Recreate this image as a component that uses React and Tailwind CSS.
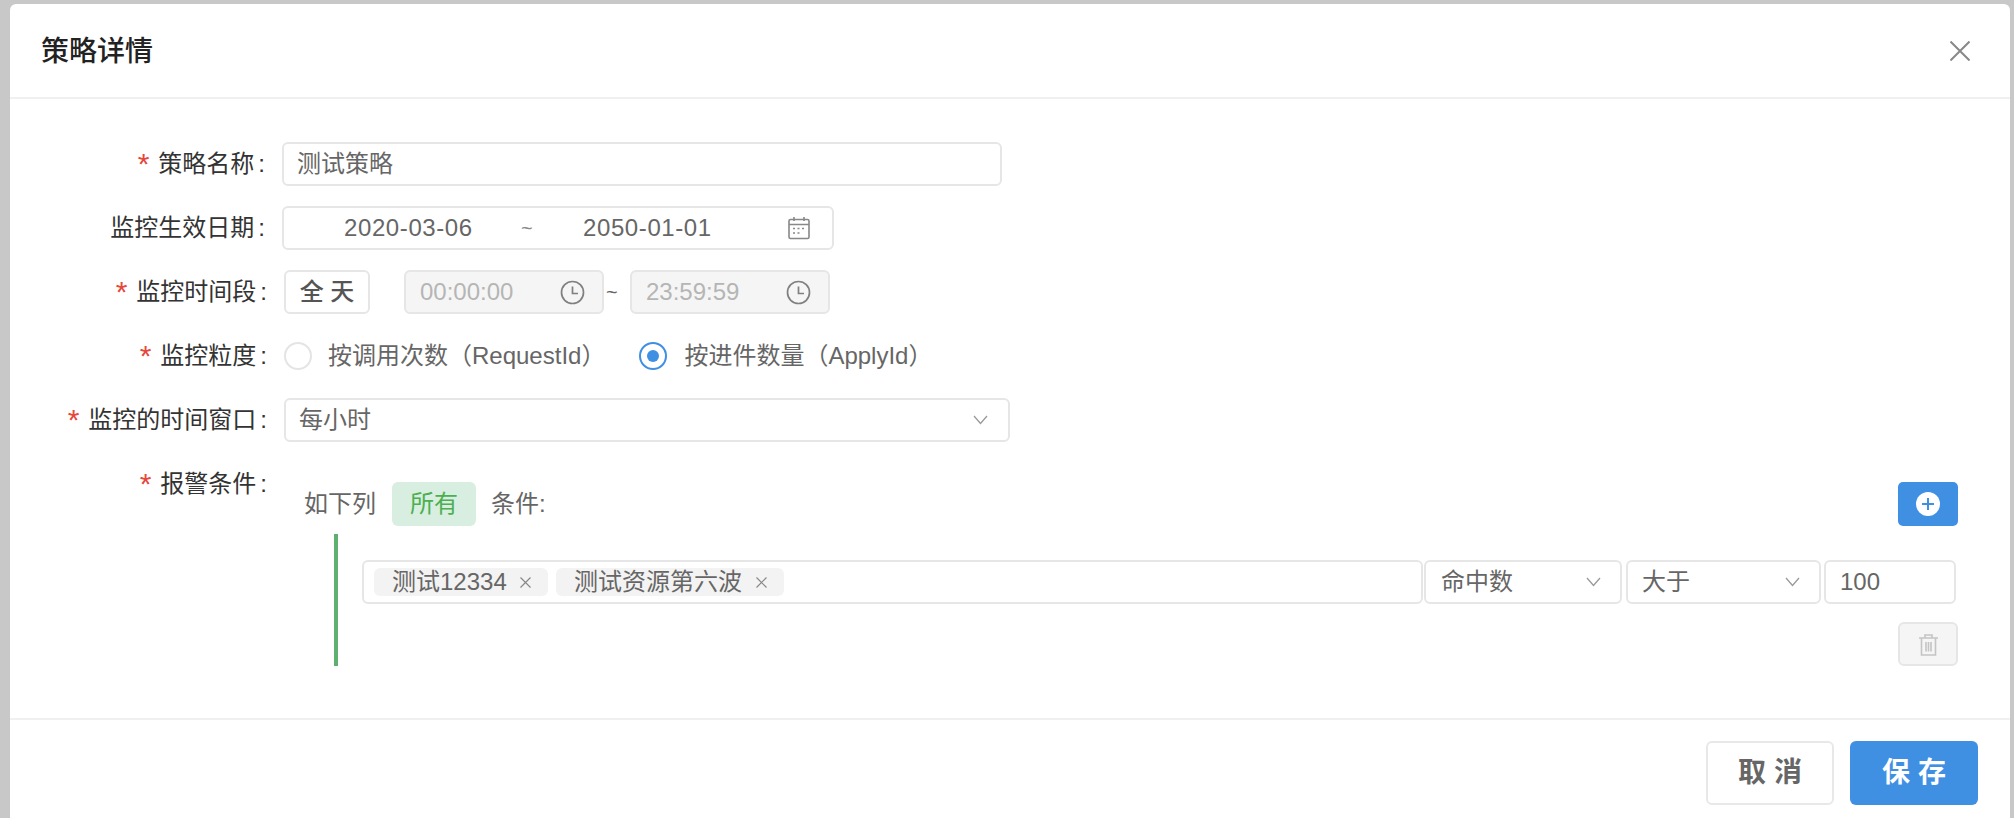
const font = { fontFamily: '"Liberation Sans", "Noto Sans CJK SC", sans-serif' };

function Label({ required, children, pad = 'pr-[16px]', width = 'w-[273px]' }) {
  return (
    <div className={`${width} ${pad} shrink-0 h-[44px] flex items-center justify-end text-[24px] text-[#333] whitespace-nowrap`}>
      {required && <span className="text-[#e5483a] text-[30px] leading-none mr-[9px]">*</span>}
      <span>{children}</span>
      <span className="ml-[4px]">:</span>
    </div>
  );
}

function Chevron() {
  return (
    <svg width="15" height="10" viewBox="0 0 15 10" fill="none" stroke="#999" strokeWidth="1.3" className="shrink-0">
      <path d="M1 1 L7.5 8.5 L14 1" />
    </svg>
  );
}

function Clock() {
  return (
    <svg width="25" height="25" viewBox="0 0 25 25" fill="none" stroke="#808080" strokeWidth="1.7" className="shrink-0">
      <circle cx="12.5" cy="12.5" r="11" />
      <path d="M12.5 6.5 V13.5 H18" />
    </svg>
  );
}

function Calendar() {
  return (
    <svg width="22" height="24" viewBox="0 0 22 24" fill="none" stroke="#888" strokeWidth="1.6" className="shrink-0">
      <rect x="1" y="3.5" width="20" height="19" rx="1.5" />
      <path d="M1 8.5 H21 M6 1 V5 M16 1 V5" />
      <path d="M5 12.5 H8 M9.5 12.5 H12.5 M14 12.5 H17 M5 17 H8 M9.5 17 H12.5" strokeDasharray="2 1" />
    </svg>
  );
}

function Close() {
  return (
    <svg width="13" height="13" viewBox="0 0 13 13" fill="none" stroke="#888" strokeWidth="1.2" className="shrink-0">
      <path d="M1.5 1.5 L11.5 11.5 M11.5 1.5 L1.5 11.5" />
    </svg>
  );
}

function Tag({ children, className }) {
  return (
    <div className={`h-[28px] rounded-[6px] bg-[#f3f3f3] flex items-center justify-between pl-[18px] pr-[16px] text-[24px] text-[#666] whitespace-nowrap ${className}`}>
      <span>{children}</span>
      <Close />
    </div>
  );
}

function TimeBox({ value, className }) {
  return (
    <div className={`h-[44px] border-2 border-[#e6e6e6] bg-[#f5f5f5] rounded-[6px] flex items-center justify-between pl-[14px] pr-[17px] text-[24px] text-[#b5b5b5] ${className}`}>
      <span>{value}</span>
      <Clock />
    </div>
  );
}

function Radio({ checked, children, className }) {
  return (
    <div className={`flex items-center text-[24px] text-[#666] whitespace-nowrap ${className}`}>
      <div className={`w-[28px] h-[28px] rounded-full border-2 flex items-center justify-center ${checked ? 'border-[#3f8fe3]' : 'border-[#e4e4e4]'}`}>
        {checked && <div className="w-[12px] h-[12px] rounded-full bg-[#3f8fe3]" />}
      </div>
      <span>{children}</span>
    </div>
  );
}

export default function App() {
  return (
    <div className="h-[818px] overflow-hidden bg-[#c8c8c8] pt-[4px] pl-[10px] pr-[4px]" style={font}>
      <div className="h-[814px] bg-white rounded-t-[6px] flex flex-col">
        {/* Header */}
        <div className="h-[95px] shrink-0 border-b-2 border-[#f0f0f0] flex items-center justify-between pl-[31px] pr-[40px]">
          <h1 className="pt-[2px] text-[28px] font-medium text-[#222]">策略详情</h1>
          <svg width="20" height="20" viewBox="0 0 20 20" fill="none" stroke="#888" strokeWidth="2">
            <path d="M0.5 0.5 L19.5 19.5 M19.5 0.5 L0.5 19.5" />
          </svg>
        </div>

        {/* Form */}
        <div className="flex-1 pt-[43px] flex flex-col gap-[20px]">
          <div className="flex">
            <Label required pad="pr-[17px]" width="w-[272px]">策略名称</Label>
            <div className="w-[720px] h-[44px] border-2 border-[#e6e6e6] rounded-[6px] flex items-center pl-[13px] text-[24px] text-[#666]">测试策略</div>
          </div>

          <div className="flex">
            <Label pad="pr-[17px]" width="w-[272px]">监控生效日期</Label>
            <div className="w-[552px] h-[44px] border-2 border-[#e6e6e6] rounded-[6px] flex items-center pl-[60px] pr-[22px] text-[24px] tracking-[0.6px] text-[#666] whitespace-nowrap">
              <span className="w-[130px]">2020-03-06</span>
              <span className="ml-[47px] w-[14px] text-[20px] text-[#888]">~</span>
              <span className="ml-[48px]">2050-01-01</span>
              <div className="ml-auto"><Calendar /></div>
            </div>
          </div>

          <div className="flex items-center">
            <Label required>监控时间段</Label>
            <div className="ml-[1px] w-[86px] h-[44px] border-2 border-[#e6e6e6] rounded-[6px] flex items-center justify-center text-[24px] font-medium text-[#555]">全 天</div>
            <TimeBox value="00:00:00" className="ml-[34px] w-[200px]" />
            <span className="w-[26px] pl-[2px] text-[20px] text-[#666]">~</span>
            <TimeBox value="23:59:59" className="w-[200px]" />
          </div>

          <div className="flex items-center">
            <Label required>监控粒度</Label>
            <Radio className="ml-[1px] gap-[16px]">按调用次数（RequestId）</Radio>
            <Radio checked className="ml-[34px] gap-[17px]">按进件数量（ApplyId）</Radio>
          </div>

          <div className="flex">
            <Label required>监控的时间窗口</Label>
            <div className="ml-[1px] w-[726px] h-[44px] border-2 border-[#e6e6e6] rounded-[6px] flex items-center justify-between pl-[13px] pr-[20px] text-[24px] text-[#666]">
              <span>每小时</span>
              <Chevron />
            </div>
          </div>

          <div className="flex">
            <Label required>报警条件</Label>
            <div className="w-[1675px] ml-[1px] mt-[20px]">
              <div className="flex items-center h-[44px] pl-[20px] pr-[1px] text-[24px] text-[#666]">
                <span>如下列</span>
                <div className="ml-[16px] w-[84px] h-[44px] rounded-[6px] bg-[#d8eee0] text-[#4caf50] flex items-center justify-center">所有</div>
                <span className="ml-[15px]">条件:</span>
                <div className="ml-auto w-[60px] h-[44px] rounded-[5px] bg-[#3f8fe3] flex items-center justify-center">
                  <svg width="24" height="24" viewBox="0 0 24 24">
                    <circle cx="12" cy="12" r="12" fill="#fff" />
                    <path d="M12 6 V18 M6 12 H18" stroke="#3f8fe3" strokeWidth="2" />
                  </svg>
                </div>
              </div>

              <div className="mt-[8px] ml-[50px] h-[132px] border-l-4 border-[#5fb070] pl-[24px] pr-[3px] pt-[26px] flex flex-col">
                <div className="flex">
                  <div className="flex-1 h-[44px] border-2 border-[#e6e6e6] rounded-[6px] flex items-center pl-[10px] gap-[8px]">
                    <Tag className="w-[174px]">测试12334</Tag>
                    <Tag className="w-[228px]">测试资源第六波</Tag>
                  </div>
                  <div className="ml-[1px] w-[198px] h-[44px] border-2 border-[#e6e6e6] rounded-[6px] flex items-center justify-between pl-[15px] pr-[19px] text-[24px] text-[#666]">
                    <span>命中数</span>
                    <Chevron />
                  </div>
                  <div className="ml-[4px] w-[195px] h-[44px] border-2 border-[#e6e6e6] rounded-[6px] flex items-center justify-between pl-[14px] pr-[19px] text-[24px] text-[#666]">
                    <span>大于</span>
                    <Chevron />
                  </div>
                  <div className="ml-[3px] w-[132px] h-[44px] border-2 border-[#e6e6e6] rounded-[6px] flex items-center pl-[14px] text-[24px] text-[#666]">100</div>
                </div>
                <div className="mt-[18px] self-end w-[60px] h-[44px] border-2 border-[#e6e6e6] bg-[#f5f5f5] rounded-[6px] flex items-center justify-center -mr-[2px]">
                  <svg width="21" height="23" viewBox="0 0 21 23" fill="none" stroke="#c4c4c4" strokeWidth="1.6">
                    <path d="M1 5 H20 M7 5 V2 H14 V5" />
                    <path d="M3.5 5 V22 H17.5 V5" />
                    <path d="M8 9 V18.5 M10.5 9 V18.5 M13 9 V18.5" />
                  </svg>
                </div>
              </div>
            </div>
          </div>
        </div>

        {/* Footer */}
        <div className="h-[100px] shrink-0 border-t-2 border-[#f0f0f0] flex justify-end gap-[16px] pt-[21px] pr-[32px]">
          <button className="w-[128px] h-[64px] border-2 border-[#e8e8e8] bg-white rounded-[6px] text-[28px] font-semibold text-[#666]">取 消</button>
          <button className="w-[128px] h-[64px] bg-[#3f8fe3] rounded-[6px] text-[28px] font-semibold text-white">保 存</button>
        </div>
      </div>
    </div>
  );
}
